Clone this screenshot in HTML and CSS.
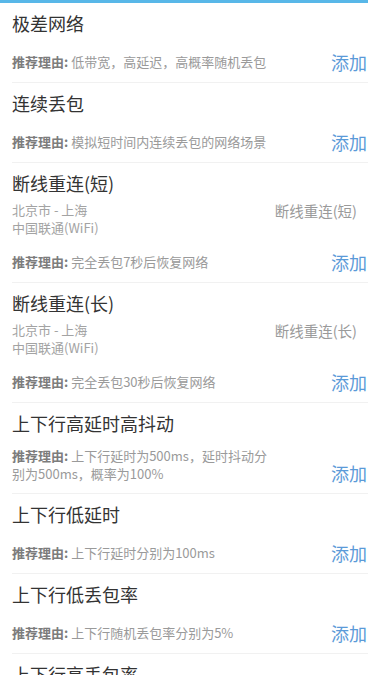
FILE: index.html
```html
<!DOCTYPE html>
<html lang="zh-CN">
<head>
<meta charset="utf-8">
<link rel="stylesheet" href="styles.css">
</head>
<body>
<div class="topbar"></div>
<div class="list">
  <div class="item">
    <div class="title">极差网络</div>
    <div class="reason-row">
      <div class="reason"><b>推荐理由:</b> 低带宽，高延迟，高概率随机丢包</div>
      <div class="add">添加</div>
    </div>
  </div>
  <div class="item">
    <div class="title">连续丢包</div>
    <div class="reason-row">
      <div class="reason"><b>推荐理由:</b> 模拟短时间内连续丢包的网络场景</div>
      <div class="add">添加</div>
    </div>
  </div>
  <div class="item">
    <div class="title">断线重连(短)</div>
    <div class="loc-row">
      <div class="loc">北京市 - 上海<br>中国联通(WiFi)</div>
      <div class="loc-name">断线重连(短)</div>
    </div>
    <div class="reason-row">
      <div class="reason"><b>推荐理由:</b> 完全丢包7秒后恢复网络</div>
      <div class="add">添加</div>
    </div>
  </div>
  <div class="item">
    <div class="title">断线重连(长)</div>
    <div class="loc-row">
      <div class="loc">北京市 - 上海<br>中国联通(WiFi)</div>
      <div class="loc-name">断线重连(长)</div>
    </div>
    <div class="reason-row">
      <div class="reason"><b>推荐理由:</b> 完全丢包30秒后恢复网络</div>
      <div class="add">添加</div>
    </div>
  </div>
  <div class="item">
    <div class="title">上下行高延时高抖动</div>
    <div class="reason-row multi">
      <div class="reason"><b>推荐理由:</b> 上下行延时为500ms，延时抖动分别为500ms，概率为100%</div>
      <div class="add">添加</div>
    </div>
  </div>
  <div class="item">
    <div class="title">上下行低延时</div>
    <div class="reason-row">
      <div class="reason"><b>推荐理由:</b> 上下行延时分别为100ms</div>
      <div class="add">添加</div>
    </div>
  </div>
  <div class="item">
    <div class="title">上下行低丢包率</div>
    <div class="reason-row">
      <div class="reason"><b>推荐理由:</b> 上下行随机丢包率分别为5%</div>
      <div class="add">添加</div>
    </div>
  </div>
  <div class="item">
    <div class="title">上下行高丢包率</div>
    <div class="reason-row">
      <div class="reason"><b>推荐理由:</b> 上下行随机丢包率分别为20%</div>
      <div class="add">添加</div>
    </div>
  </div>
</div>
</body>
</html>
```

FILE: styles.css
```css
html, body {
  margin: 0;
  padding: 0;
  background: #ffffff;
}
body {
  font-family: "Noto Sans CJK SC", "Noto Sans", sans-serif;
  width: 368px;
  height: 675px;
  overflow: hidden;
}
.topbar {
  height: 3px;
  background: #58b7e8;
}
.list {
  display: flex;
  flex-direction: column;
}
.item {
  margin-left: 12px;
  padding: 8px 0 8px 0;
  border-bottom: 1px solid #f1f1f1;
  display: flex;
  flex-direction: column;
}
.item:first-child {
  padding-top: 8px;
}
.title {
  font-size: 18px;
  line-height: 24px;
  color: #333333;
}
.reason-row {
  margin-top: 15px;
  display: flex;
  align-items: center;
  justify-content: space-between;
  height: 24px;
}
.reason-row.multi {
  margin-top: 12px;
  height: auto;
  align-items: flex-end;
}
.reason {
  width: 258px;
  font-size: 13px;
  line-height: 18px;
  color: #9a9a9a;
}
.reason-row.multi .reason {
  line-height: 17.5px;
  padding-bottom: 3px;
}
.reason b {
  color: #7c7c7c;
  font-weight: 700;
}
.add {
  font-size: 18px;
  line-height: 24px;
  color: #5b9ad8;
  margin-right: 1px;
}
.loc-row {
  margin-top: 6px;
  display: flex;
  justify-content: space-between;
  align-items: flex-start;
}
.loc {
  font-size: 13px;
  line-height: 18px;
  color: #a3a3a3;
}
.loc-name {
  font-size: 14.5px;
  line-height: 20px;
  color: #9a9a9a;
  margin-right: 11px;
}
.loc-row + .reason-row {
  margin-top: 13px;
}
```
